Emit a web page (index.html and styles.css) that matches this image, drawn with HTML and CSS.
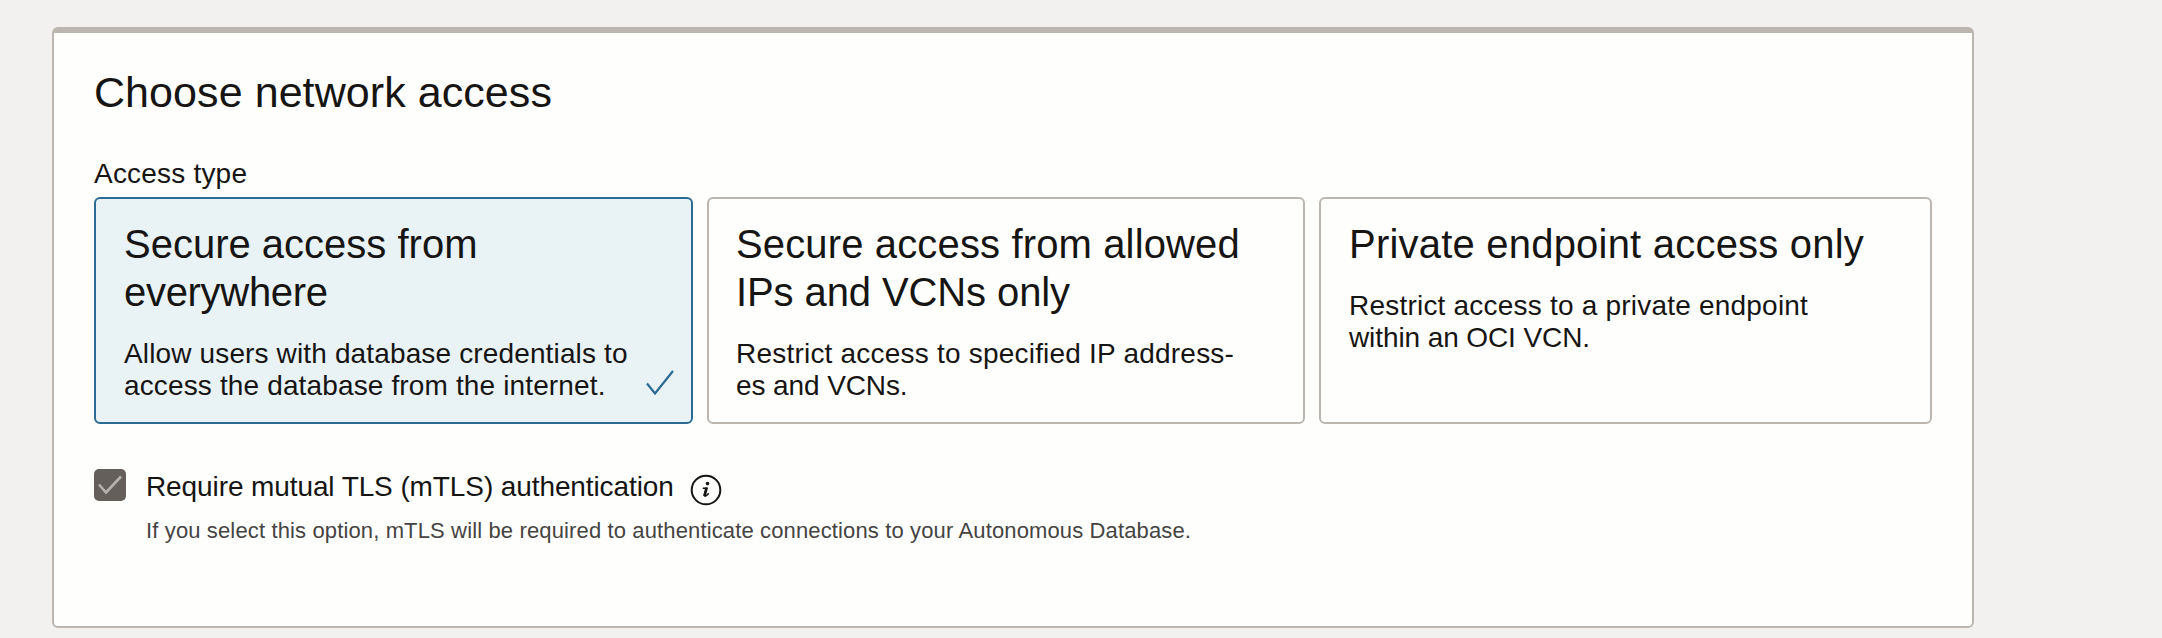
FILE: index.html
```html
<!DOCTYPE html>
<html lang="en">
<head>
<meta charset="utf-8">
<title>Choose network access</title>
<link rel="stylesheet" href="styles.css">
</head>
<body>
<section class="panel">
  <h2 class="panel-title">Choose network access</h2>
  <div class="field-label">Access type</div>
  <div class="cards">
    <div class="card selected">
      <h3 class="card-title">Secure access from<br><span class="tight">everywhere</span></h3>
      <p class="card-text">Allow users with database credentials to<br>access the database from the internet.</p>
      <svg class="card-check" width="32" height="32" viewBox="0 0 32 32"><path d="M3 15.500L11 25.500L29 3" fill="none" stroke="#2b6a92" stroke-width="2.200"/></svg>
    </div>
    <div class="card middle">
      <h3 class="card-title"><span class="loose">Secure access from allowed</span><br><span class="snug">IPs and VCNs only</span></h3>
      <p class="card-text"><span class="looser">Restrict access to specified IP address-</span><br><span class="snug">es and VCNs.</span></p>
    </div>
    <div class="card">
      <h3 class="card-title"><span class="looser">Private endpoint access only</span></h3>
      <p class="card-text"><span class="looser">Restrict access to a private endpoint</span><br><span class="snug">within an OCI VCN.</span></p>
    </div>
  </div>
  <div class="option">
    <svg class="checkbox" width="32" height="32" viewBox="0 0 32 32"><rect width="32" height="32" rx="5" fill="#655f5c"/><path d="M5 15.500L12 23.500L27 7.500" fill="none" stroke="#b4b1af" stroke-width="2.600"/></svg>
    <div class="option-body">
      <div class="option-row">
        <span class="option-label">Require mutual TLS (mTLS) authentication</span>
        <svg class="info" width="32" height="32" viewBox="0 0 32 32"><circle cx="16" cy="16" r="14.300" fill="none" stroke="#161513" stroke-width="2"/><circle cx="17.500" cy="9.600" r="1.800" fill="#161513"/><path d="M12.700 14.200H16.600L14.600 20.600Q14.200 22.400 15.400 22Q16.900 21.400 18.800 19.200" fill="none" stroke="#161513" stroke-width="1.500"/><path d="M16.700 13.500L14.400 22" stroke="#161513" stroke-width="2.800"/></svg>
      </div>
      <div class="hint">If you select this option, mTLS will be required to authenticate connections to your Autonomous Database.</div>
    </div>
  </div>
</section>
</body>
</html>
```
FILE: styles.css
```css
* { box-sizing: border-box; }
body {
  margin: 0;
  padding: 27px 188px 10px 52px;
  height: 638px;
  background: #f3f1f0;
  color: #161513;
  font-family: "Liberation Sans", Arial, sans-serif;
  white-space: nowrap;
  overflow: hidden;
}
h2, h3, p { margin: 0; font-weight: 400; }
.panel {
  height: 601px;
  padding: 33px 40px 0;
  background: #fefefc;
  border: 2px solid #bcb6b1;
  border-top-width: 6px;
  border-radius: 6px;
}
.panel-title { font-size: 43px; line-height: 52px; letter-spacing: 0.07px; }
.field-label { margin-top: 40px; font-size: 28px; line-height: 32px; letter-spacing: 0.2px; }
.cards {
  display: grid;
  grid-template-columns: 599fr 598fr 613fr;
  gap: 14px;
  height: 227px;
  margin-top: 7px;
}
.card {
  position: relative;
  padding: 21px 28px 20px;
  border: 2px solid #bcb6b1;
  border-radius: 6px;
}
.middle { padding-left: 27px; }
.selected { background: #e9f2f5; border-color: #2b6a92; }
.card-title { font-size: 40px; line-height: 48px; }
.card-text { margin-top: 22px; font-size: 28px; line-height: 32px; letter-spacing: 0.14px; }
.tight { letter-spacing: -0.3px; }
.snug { letter-spacing: -0.1px; }
.loose { letter-spacing: 0.14px; }
.looser { letter-spacing: 0.21px; }
.card-check { position: absolute; right: 15px; bottom: 22px; }
.option { display: flex; gap: 20px; margin-top: 45px; }
.option-row { display: flex; gap: 16px; height: 38px; }
.option-label { font-size: 28px; line-height: 36px; letter-spacing: -0.1px; }
.info { margin-top: 5px; }
.hint { margin-top: 11px; font-size: 22px; line-height: 26px; letter-spacing: 0.135px; color: #454442; }
```
